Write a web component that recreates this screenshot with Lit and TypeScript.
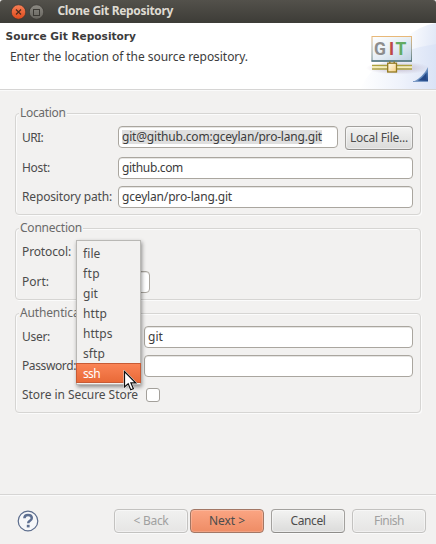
import { LitElement, html, css, svg } from "lit";
import { customElement, property } from "lit/decorators.js";

/** One line of text whose tracking is tuned so that it spans a given width. */
@customElement("fit-text")
class FitText extends LitElement {
  @property() text = "";
  @property({ type: Number }) w = 0;
  static styles = css`
    :host { display: block; white-space: pre; line-height: 16px; flex: none; }
    span { display: inline-block; }
  `;
  updated() {
    const s = this.renderRoot.querySelector("span") as HTMLElement;
    s.style.letterSpacing = "0px";
    const natural = s.getBoundingClientRect().width;
    if (this.w && natural) s.style.letterSpacing = `${(this.w - natural) / this.text.length}px`;
  }
  render() {
    return html`<span>${this.text}</span>`;
  }
}

const t = (text: string, w: number) => html`<fit-text .text=${text} .w=${w}></fit-text>`;

const protocols: [string, number][] = [
  ["file", 17.5], ["ftp", 17], ["git", 15], ["http", 24], ["https", 29.5], ["sftp", 22], ["ssh", 17],
];

const banner = svg`
  <defs>
    <linearGradient id="sky" x1="0" y1="0" x2="1" y2="0.3">
      <stop offset="0" stop-color="#ffffff"/><stop offset="1" stop-color="#e1e8f7"/>
    </linearGradient>
    <linearGradient id="sky2" x1="0" y1="0" x2="1" y2="0">
      <stop offset="0" stop-color="#ffffff"/><stop offset="0.55" stop-color="#eef2fb"/><stop offset="1" stop-color="#dae3f6"/>
    </linearGradient>
    <linearGradient id="panel" x1="0" y1="0" x2="1" y2="1">
      <stop offset="0" stop-color="#ffffff"/><stop offset="0.5" stop-color="#e6eef5"/><stop offset="1" stop-color="#bccfe2"/>
    </linearGradient>
    <linearGradient id="frame" x1="0" y1="0" x2="0" y2="1">
      <stop offset="0" stop-color="#e8b878"/><stop offset="0.5" stop-color="#a5aaa0"/><stop offset="1" stop-color="#5d7f86"/>
    </linearGradient>
    <linearGradient id="tri" x1="0" y1="0" x2="1" y2="1">
      <stop offset="0.35" stop-color="#c3d6ee"/><stop offset="0.7" stop-color="#4571ab"/><stop offset="1" stop-color="#1d3f7e"/>
    </linearGradient>
    <radialGradient id="shade"><stop offset="0" stop-color="#b4a9c0"/><stop offset="1" stop-color="#b4a9c0" stop-opacity="0"/></radialGradient>
    <linearGradient id="knob" x1="0" y1="0" x2="1" y2="1">
      <stop offset="0" stop-color="#fffdf0"/><stop offset="1" stop-color="#f5cf80"/>
    </linearGradient>
  </defs>
  <path d="M46 15 Q58 3 76 0 V66 H46Z" fill="url(#sky)"/>
  <path d="M0 66 Q16 30 76 21 V66Z" fill="url(#sky2)"/>
  <ellipse cx="38" cy="45" rx="32" ry="6.5" fill="url(#shade)" opacity="0.75"/>
  <rect x="12" y="13.5" width="39.5" height="24.5" fill="url(#panel)" stroke="url(#frame)"/>
  <path d="M11.5 38H52" stroke="#557981" stroke-width="1.6"/>
  <g font-family="Roboto, sans-serif" font-weight="700" font-size="17.5">
    <text x="14" y="32.2" fill="#8d8d8d">G</text>
    <text x="29" y="32.2" fill="#bd4747">I</text>
    <text x="35.6" y="32.2" fill="#62ab62">T</text>
  </g>
  <path d="M12 42.5H52M12 46H52" stroke="#ada23c" stroke-width="1.5"/>
  <path d="M12 44.2H52" stroke="#f7efb0" stroke-width="1.6"/>
  <path d="M29.8 38.5v2M34.2 38.5v2" stroke="#8b7a23" stroke-width="1.4"/>
  <rect x="27.7" y="40.2" width="8.8" height="8.8" fill="url(#knob)" stroke="#937a20" stroke-width="1.3"/>
  <path d="M53 59 Q63 54 68 44 V59Z" fill="url(#tri)"/>
  <path d="M53 58.5H68" stroke="#7c9ac5"/>
  <path d="M58 57.5 Q63 55 66.5 49.5V57.5Z" fill="#244887"/>`;

@customElement("app-root")
class AppRoot extends LitElement {
  static styles = css`
    * { box-sizing: border-box; }
    :host {
      display: flex; flex-direction: column; position: relative; width: 436px; height: 544px; overflow: hidden;
      background: #f2f1f0; color: #4c4c4c; font: 12px/16px "Noto Sans", sans-serif;
    }
    .titlebar {
      height: 23px; flex: none; display: flex; align-items: center; padding: 0 0 2px 11px;
      background: linear-gradient(#53514b, #3d3c37); border-radius: 3px 3px 0 0; color: #dfdbd2; font-weight: 700;
    }
    .controls { display: flex; gap: 3px; margin-right: 13.5px; padding-top: 2px; }
    .controls svg { display: block; }
    .banner { height: 66px; flex: none; display: flex; justify-content: space-between; background: #fff; }
    .heading { padding: 5px 0 0 5.5px; color: #3c3c3c; }
    .heading .main { font-family: "DejaVu Sans", sans-serif; font-size: 10.6px; font-weight: 700; margin-bottom: 5px; }
    .heading .sub { padding-left: 4.5px; }
    .banner svg { display: block; flex: none; }
    .rule { height: 2px; flex: none; background: #d6d5d4; border-bottom: 1px solid #fafafa; }
    .page { flex: 1; padding: 22px 15px 0; display: flex; flex-direction: column; gap: 13px; }
    .group {
      border: 1px solid #d6d5d3; border-radius: 4px; padding: 12px 7px 0 6px; position: relative;
      box-shadow: 1px 1px 0 #fbfbfb, inset 1px 1px 0 #fbfbfb;
    }
    .location { height: 102px; }
    .connection { height: 72px; }
    .auth { height: 100px; }
    .legend { position: absolute; left: 3px; top: -9px; padding: 0 1px; background: #f2f1f0; color: #6a6a6a; }
    .row { display: flex; align-items: center; height: 22px; }
    .location .label { width: 96px; }
    .location .row { margin-bottom: 7px; }
    .location .first { margin-bottom: 9px; }
    .location .first .label { padding-top: 2px; }
    .label { width: 122px; flex: none; }
    .field {
      flex: 1; height: 22px; display: flex; align-items: center; padding-left: 3px; background: #fff; color: #3c3c3c;
      border: 1px solid #aaa69f; border-radius: 4px; box-shadow: inset 0 1px 0 #e6e5e3;
    }
    .picked { background: #dfdfdf; height: 14px; display: flex; align-items: center; }
    .button {
      display: flex; align-items: center; justify-content: center; height: 24px; border: 1px solid #a3a19e; border-bottom-color: #8e8c89;
      border-radius: 4px; background: linear-gradient(#f3f3f2, #dbdbda); box-shadow: inset 0 0 0 1px #ffffff70, 0 1px 0 #fafafa;
    }
    .local { width: 68px; margin-left: 7px; align-self: flex-start; }
    .connection .row { margin-bottom: 8px; }
    .connection .label { width: 56px; }
    .port { flex: none; width: 72px; }
    .auth .row { margin-bottom: 7px; }
    .auth .store { margin-bottom: 0; }
    .check { width: 14px; height: 14px; margin-left: 2px; background: #fff; border: 1px solid #a3a09b; border-radius: 3px; }
    .footer { height: 48px; flex: none; display: flex; align-items: center; padding: 2px 10px 0 17px; }
    .help { margin-right: 75px; display: block; }
    .footer .button { width: 74px; height: 24px; margin-right: 7px; }
    .footer .button.back { margin-right: 2px; }
    .footer .button:last-child { margin-right: 0; }
    .footer .off { color: #a0a0a0; border-color: #c3c2c0; background: linear-gradient(#f1f1f0, #e6e5e4); }
    .footer .next { background: linear-gradient(#fba583, #ee8c65); border-color: #a27765; box-shadow: inset 0 0 0 1px #ffffff30; }
    .menu {
      position: absolute; left: 76px; top: 240px; width: 65px; height: 145px; padding-top: 2px;
      background: #f2f1f0; border: 1px solid #b9b8b5; box-shadow: 1px 2px 4px #0000006b;
    }
    .item { height: 20px; display: flex; align-items: center; padding: 2px 0 0 6px; }
    .item.on { margin: 0 -1px; color: #fff; border: 1px solid #c75b35; background: linear-gradient(#fa8355, #e96a38); }
    .pointer { position: absolute; left: 123px; top: 370px; }
  `;

  render() {
    return html`
      <div class="titlebar">
        <div class="controls">
          <svg width="15" height="16" viewBox="0 0 15 16">
            <defs><linearGradient id="r" x1="0" y1="0" x2="0" y2="1"><stop stop-color="#f78057"/><stop offset="1" stop-color="#dd4a1c"/></linearGradient></defs>
            <circle cx="7.5" cy="8" r="7.2" fill="url(#r)" stroke="#35332f" stroke-width=".6"/>
            <path d="M5 5.5l5 5M10 5.5l-5 5" stroke="#4b2b1d" stroke-width="1.2"/>
          </svg>
          <svg width="15" height="16" viewBox="0 0 15 16">
            <defs><linearGradient id="g" x1="0" y1="0" x2="0" y2="1"><stop stop-color="#8c8a83"/><stop offset="1" stop-color="#66645e"/></linearGradient></defs>
            <circle cx="7.5" cy="8" r="7.2" fill="url(#g)" stroke="#35332f" stroke-width=".6"/>
            <rect x="4.5" y="5.5" width="6" height="6" fill="none" stroke="#3b3934"/>
          </svg>
        </div>
        ${t("Clone Git Repository", 115.5)}
      </div>
      <div class="banner">
        <div class="heading">
          <div class="main">${t("Source Git Repository", 130.5)}</div>
          <div class="sub">${t("Enter the location of the source repository.", 238)}</div>
        </div>
        <svg width="76" height="66" viewBox="0 0 76 66">${banner}</svg>
      </div>
      <div class="rule"></div>
      <div class="page">
        <div class="group location">
          <div class="legend">${t("Location", 45.5)}</div>
          <div class="row first">
            <div class="label">${t("URI:", 21)}</div>
            <div class="field"><div class="picked">${t("git@github.com:gceylan/pro-lang.git", 200)}</div></div>
            <div class="button local">${t("Local File...", 58)}</div>
          </div>
          <div class="row">
            <div class="label">${t("Host:", 28)}</div>
            <div class="field">${t("github.com", 61)}</div>
          </div>
          <div class="row">
            <div class="label">${t("Repository path:", 90)}</div>
            <div class="field">${t("gceylan/pro-lang.git", 110)}</div>
          </div>
        </div>
        <div class="group connection">
          <div class="legend">${t("Connection", 62)}</div>
          <div class="row first"><div class="label">${t("Protocol:", 49)}</div></div>
          <div class="row"><div class="label">${t("Port:", 27)}</div><div class="field port"></div></div>
        </div>
        <div class="group auth">
          <div class="legend">${t("Authentication", 81)}</div>
          <div class="row"><div class="label">${t("User:", 28)}</div><div class="field">${t("git", 15)}</div></div>
          <div class="row"><div class="label">${t("Password:", 54)}</div><div class="field"></div></div>
          <div class="row store"><div class="label">${t("Store in Secure Store", 116)}</div><div class="check"></div></div>
        </div>
      </div>
      <div class="rule"></div>
      <div class="footer">
        <svg class="help" width="22" height="22" viewBox="0 0 22 22">
          <circle cx="11" cy="11" r="9.8" fill="#f6f7f9" stroke="#5b6c8c" stroke-width="1.2"/>
          <path d="M7.4 8.2 Q7.5 5 11 5 Q14.8 5 14.8 8 Q14.8 9.8 12.8 10.8 Q11.2 11.6 11.2 13.2" fill="none" stroke="#5d6f91" stroke-width="2.5"/>
          <rect x="9.8" y="14.8" width="2.8" height="2.6" fill="#5d6f91"/>
        </svg>
        <div class="button back off">${t("< Back", 35)}</div>
        <div class="button next">${t("Next >", 36)}</div>
        <div class="button">${t("Cancel", 35)}</div>
        <div class="button off">${t("Finish", 30)}</div>
      </div>
      <div class="menu">
        ${protocols.map(([name, w]) => html`<div class="item ${name === "ssh" ? "on" : ""}">${t(name, w)}</div>`)}
      </div>
      <svg class="pointer" width="14" height="22" viewBox="0 0 14 22">
        <path d="M1.5 1.5V17L5.2 13.7L7.7 19.8L10.4 18.7L7.9 12.8H12.6Z" fill="#fff" stroke="#fff" stroke-width="2"/>
        <path d="M1.5 1.5V17L5.2 13.7L7.7 19.8L10.4 18.7L7.9 12.8H12.6Z" fill="#fff" stroke="#111" stroke-width="1.2"/>
      </svg>
    `;
  }
}
